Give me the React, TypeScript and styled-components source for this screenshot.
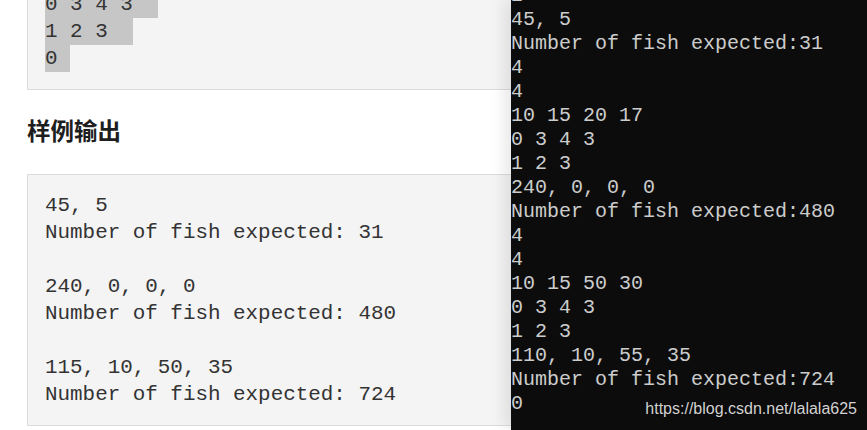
import React from "react";
import styled, { createGlobalStyle } from "styled-components";

const GlobalStyle = createGlobalStyle`
  html, body {
    margin: 0;
    padding: 0;
    background: #ffffff;
    overflow: hidden;
  }
  #root {
    width: 867px;
    height: 430px;
  }
`;

const Screen = styled.div`
  display: grid;
  grid-template-columns: 511px 356px;
  width: 867px;
  height: 430px;
  overflow: hidden;
  background: #ffffff;
`;

const Page = styled.div`
  display: flex;
  flex-direction: column;
  padding-left: 27px;
  margin-top: -27px;
  min-width: 0;
`;

const SampleBox = styled.pre`
  margin: 0;
  width: 560px;
  box-sizing: border-box;
  padding: 17px 17px;
  background: #f4f4f4;
  border: 1px solid #dcdcdc;
  font-family: "Liberation Mono", "Courier New", monospace;
  font-size: 20.9px;
  line-height: 27px;
  color: #333333;
  white-space: pre;
`;

const Line = styled.div`
  height: 27px;
`;

const Selected = styled.span`
  background: #c6c6c6;
  display: inline-block;
  height: 27px;
`;

const Heading = styled.h2`
  margin: 24px 0 28px;
  font-family: "Noto Sans CJK SC", "Noto Sans", sans-serif;
  font-weight: 700;
  font-size: 23.5px;
  line-height: 32px;
  color: #1e1e1e;
`;

const Terminal = styled.div`
  position: relative;
  z-index: 1;
  background: #0c0c0c;
  box-shadow: -7px 0 14px rgba(0, 0, 0, 0.09);
  overflow: hidden;
`;

const ConsoleLines = styled.div`
  margin-top: -16px;
  font-family: "Liberation Mono", "Courier New", monospace;
  font-size: 20px;
  line-height: 24px;
  color: #cccccc;
  white-space: pre;
`;

const ConsoleLine = styled.div`
  height: 24px;
`;

const Watermark = styled.div`
  position: absolute;
  right: 10px;
  bottom: 12px;
  font-family: "Liberation Sans", Arial, sans-serif;
  font-size: 16px;
  line-height: 18px;
  color: #d2d2d2;
  text-shadow: 0 0 2px rgba(0, 0, 0, 0.6);
`;

const selectedInput = ["0 3 4 3  ", "1 2 3  ", "0 "];

const sampleOutput = [
  "45, 5",
  "Number of fish expected: 31",
  "",
  "240, 0, 0, 0",
  "Number of fish expected: 480",
  "",
  "115, 10, 50, 35",
  "Number of fish expected: 724",
];

const consoleOutput = [
  "2",
  "45, 5",
  "Number of fish expected:31",
  "4",
  "4",
  "10 15 20 17",
  "0 3 4 3",
  "1 2 3",
  "240, 0, 0, 0",
  "Number of fish expected:480",
  "4",
  "4",
  "10 15 50 30",
  "0 3 4 3",
  "1 2 3",
  "110, 10, 55, 35",
  "Number of fish expected:724",
  "0",
];

export default function App() {
  return (
    <>
      <GlobalStyle />
      <Screen>
        <Page>
          <SampleBox>
            {selectedInput.map((l, i) => (
              <Line key={i}>
                <Selected>{l}</Selected>
              </Line>
            ))}
          </SampleBox>
          <Heading>样例输出</Heading>
          <SampleBox>
            {sampleOutput.map((l, i) => (
              <Line key={i}>{l}</Line>
            ))}
          </SampleBox>
        </Page>
        <Terminal>
          <ConsoleLines>
            {consoleOutput.map((l, i) => (
              <ConsoleLine key={i}>{l}</ConsoleLine>
            ))}
          </ConsoleLines>
          <Watermark>https://blog.csdn.net/lalala625</Watermark>
        </Terminal>
      </Screen>
    </>
  );
}
